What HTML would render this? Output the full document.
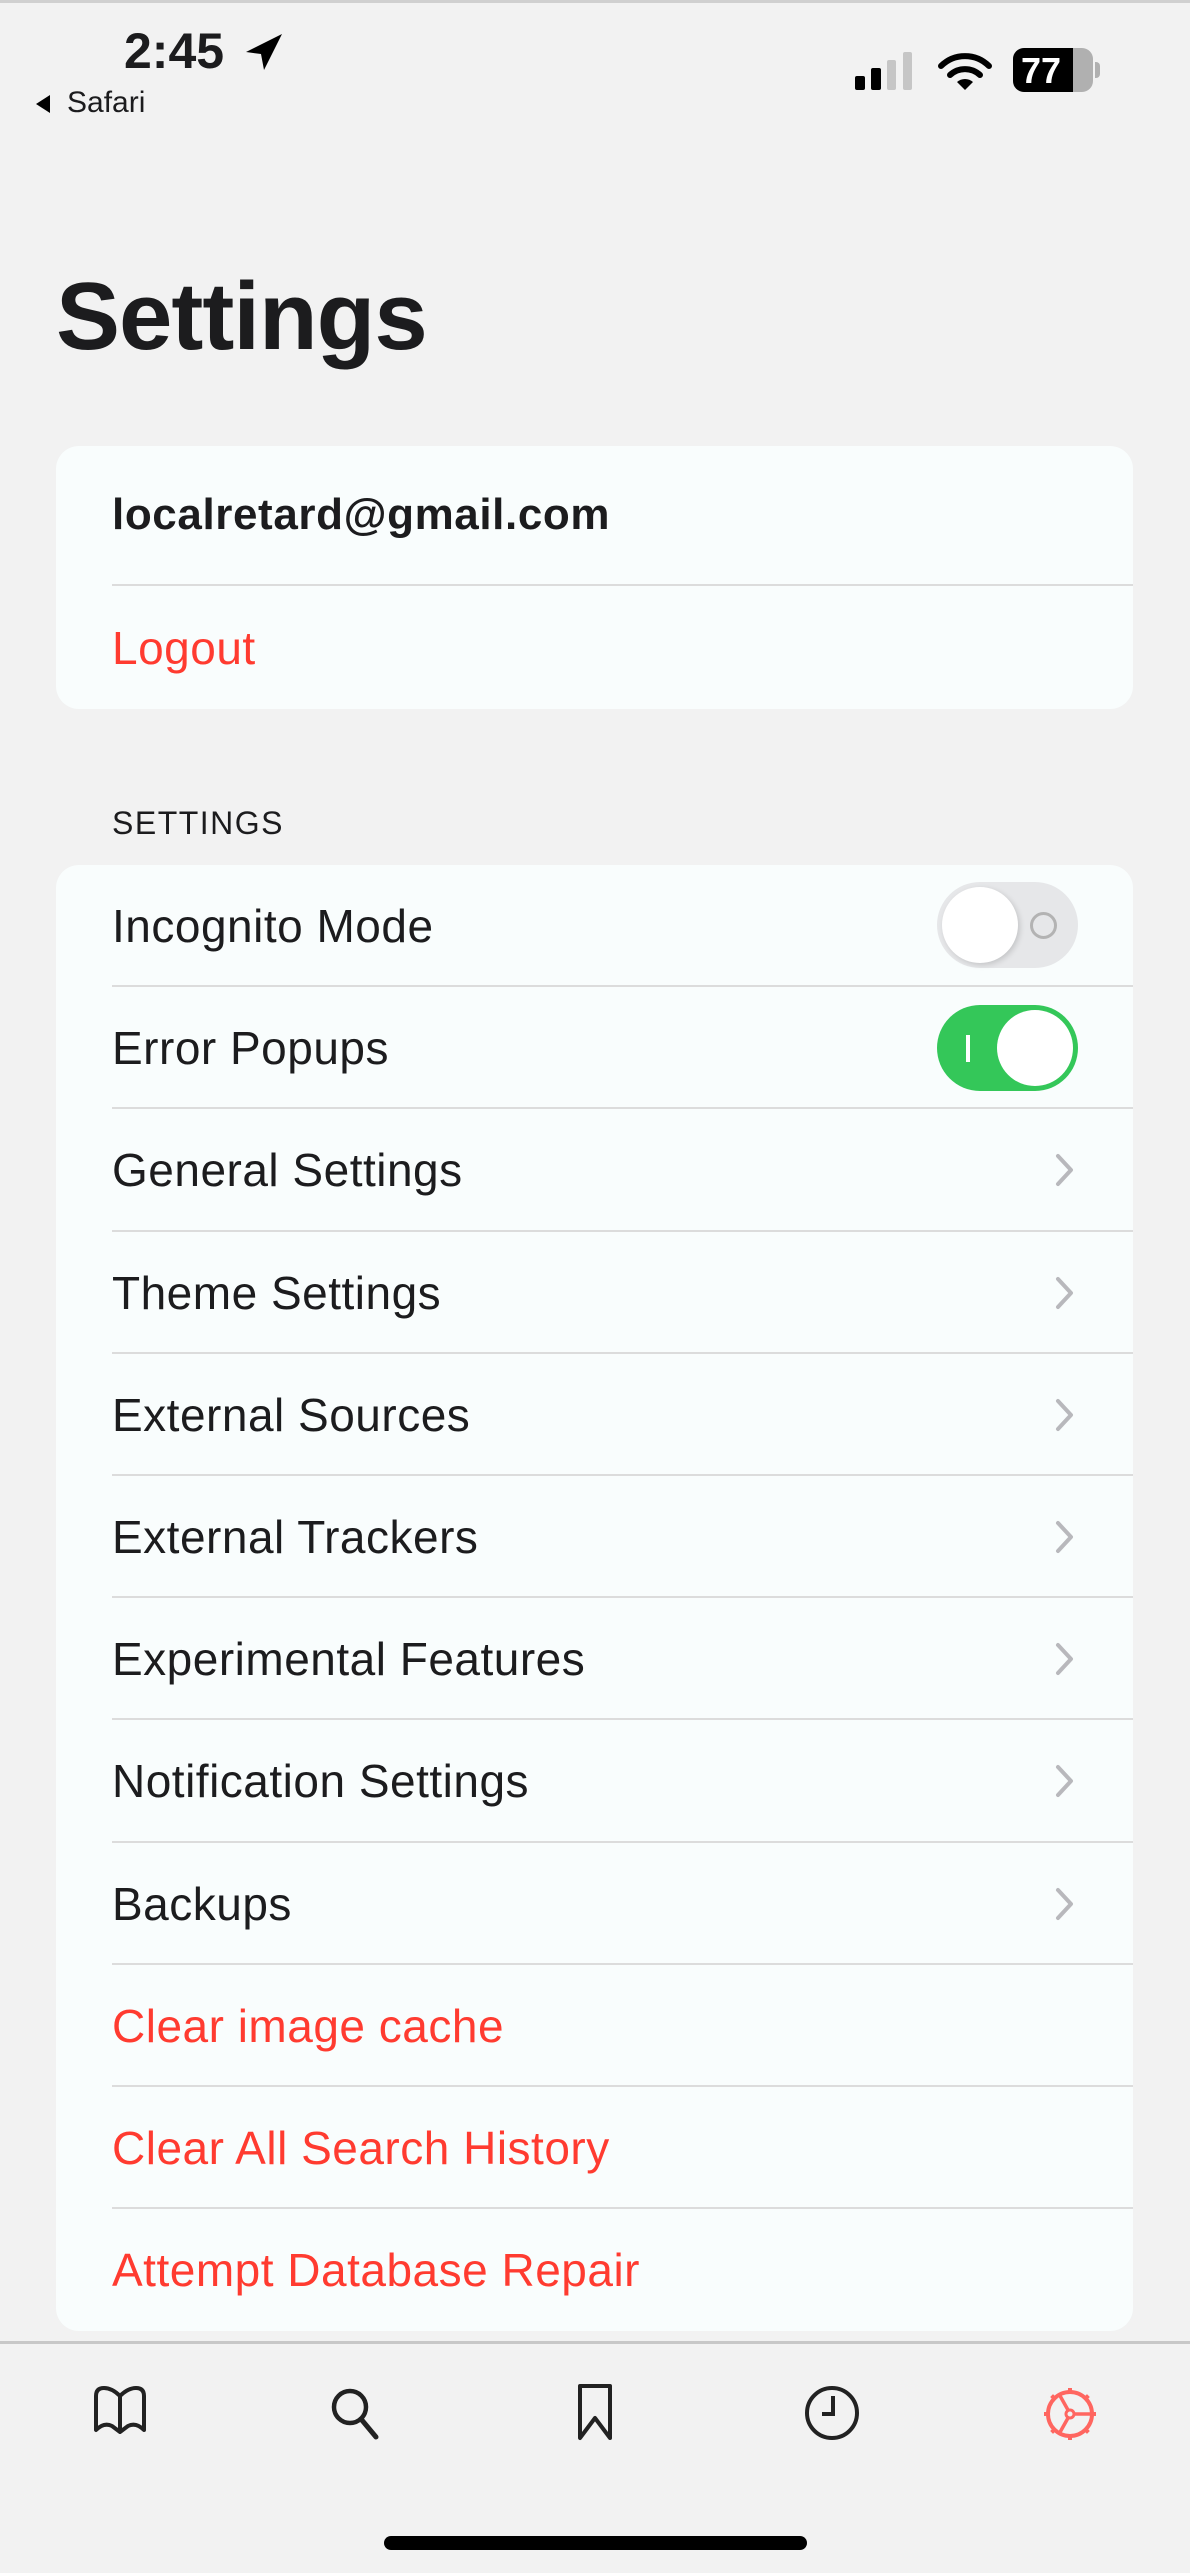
<!DOCTYPE html>
<html><head><meta charset="utf-8"><style>
*{margin:0;padding:0;box-sizing:border-box}
body{width:1190px;height:2573px;background:#f2f2f2;font-family:"Liberation Sans",sans-serif;position:relative;overflow:hidden;color:#1c1c1e}
.abs{position:absolute}
.card{position:absolute;left:56px;width:1077px;background:#f9fdfd;border-radius:23px;overflow:hidden}
.row{height:122.2px;position:relative;display:flex;align-items:center;padding-left:56px;font-size:46px;letter-spacing:0.5px}
.row:not(:last-child)::after{content:"";position:absolute;left:56px;right:0;bottom:0;height:2px;background:#dcdcdc}
.red{color:#ff3b30}
.chev{position:absolute;right:58px;top:50%;margin-top:-17px}
</style></head><body>
<div class="abs" style="left:0;top:0;width:1190px;height:3px;background:#d0d0d0"></div>
<div class="abs" style="left:124px;top:22px;font-size:50px;font-weight:bold;letter-spacing:0px">2:45</div>
<svg class="abs" style="left:244px;top:32px" width="40" height="40" viewBox="0 0 40 40"><path d="M38 2 L2 20 L17 22 L20 38 Z" fill="#000"/></svg>
<svg class="abs" style="left:34px;top:93px" width="20" height="22"><path d="M2 11 L16 2 L16 20 Z" fill="#000"/></svg>
<div class="abs" style="left:67px;top:86px;font-size:30px">Safari</div>
<svg class="abs" style="left:853px;top:50px" width="64" height="42"><rect x="2" y="26" width="10" height="14" rx="2" fill="#000"/><rect x="18" y="18" width="10" height="22" rx="2" fill="#000"/><rect x="34" y="10" width="9" height="30" rx="2" fill="#c6c6c6"/><rect x="50" y="2" width="9" height="38" rx="2" fill="#c6c6c6"/></svg>
<svg class="abs" style="left:935px;top:48px" width="60" height="44" viewBox="0 0 60 44"><path d="M6 18 A34 34 0 0 1 54 18" stroke="#000" stroke-width="6" fill="none" stroke-linecap="round"/><path d="M15 27 A22 22 0 0 1 45 27" stroke="#000" stroke-width="6" fill="none" stroke-linecap="round"/><path d="M22 34 L30 42 L38 34 A12 12 0 0 0 22 34Z" fill="#000"/></svg>
<div class="abs" style="left:1013px;top:48px;width:80px;height:44px;border-radius:11px;background:#b0b0b0;overflow:hidden"><div style="width:60px;height:44px;background:#000"></div><div class="abs" style="left:8px;top:2px;color:#fff;font-weight:bold;font-size:36px">77</div></div>
<div class="abs" style="left:1095px;top:62px;width:5px;height:16px;border-radius:0 4px 4px 0;background:#b0b0b0"></div>

<div class="abs" style="left:56px;top:262px;font-size:96px;font-weight:bold;letter-spacing:-1px">Settings</div>

<div class="card" style="top:446px;height:263px">
<div class="row" style="height:140px;font-weight:bold;font-size:44px;letter-spacing:0.6px"><span style="margin-top:-2px">localretard@gmail.com</span></div>
<div class="row red" style="height:123px">Logout</div>
</div>

<div class="abs" style="left:112px;top:805px;font-size:32px;letter-spacing:1.5px">SETTINGS</div>

<div class="card" style="top:865px;height:1466px">
<div class="row">Incognito Mode
<div class="abs" style="right:55px;top:17px;width:141px;height:86px;border-radius:43px;background:#e6e7e9">
<div class="abs" style="left:5px;top:5px;width:76px;height:76px;border-radius:50%;background:#fff;box-shadow:2px 2px 6px rgba(0,0,0,.15)"></div>
<div class="abs" style="left:93px;top:30px;width:27px;height:27px;border-radius:50%;border:3px solid #b3b3b3"></div></div></div>
<div class="row">Error Popups
<div class="abs" style="right:55px;top:18px;width:141px;height:86px;border-radius:43px;background:#34c759">
<div class="abs" style="left:29px;top:30px;width:4px;height:27px;background:#fff"></div>
<div class="abs" style="left:60px;top:5px;width:76px;height:76px;border-radius:50%;background:#fff"></div></div></div>
<div class="row">General Settings<svg class="chev" width="20" height="34"><path d="M3 3 L16 17 L3 31" stroke="#b8b8bc" stroke-width="4" fill="none" stroke-linecap="round" stroke-linejoin="round"/></svg></div>
<div class="row">Theme Settings<svg class="chev" width="20" height="34"><path d="M3 3 L16 17 L3 31" stroke="#b8b8bc" stroke-width="4" fill="none" stroke-linecap="round" stroke-linejoin="round"/></svg></div>
<div class="row">External Sources<svg class="chev" width="20" height="34"><path d="M3 3 L16 17 L3 31" stroke="#b8b8bc" stroke-width="4" fill="none" stroke-linecap="round" stroke-linejoin="round"/></svg></div>
<div class="row">External Trackers<svg class="chev" width="20" height="34"><path d="M3 3 L16 17 L3 31" stroke="#b8b8bc" stroke-width="4" fill="none" stroke-linecap="round" stroke-linejoin="round"/></svg></div>
<div class="row">Experimental Features<svg class="chev" width="20" height="34"><path d="M3 3 L16 17 L3 31" stroke="#b8b8bc" stroke-width="4" fill="none" stroke-linecap="round" stroke-linejoin="round"/></svg></div>
<div class="row">Notification Settings<svg class="chev" width="20" height="34"><path d="M3 3 L16 17 L3 31" stroke="#b8b8bc" stroke-width="4" fill="none" stroke-linecap="round" stroke-linejoin="round"/></svg></div>
<div class="row">Backups<svg class="chev" width="20" height="34"><path d="M3 3 L16 17 L3 31" stroke="#b8b8bc" stroke-width="4" fill="none" stroke-linecap="round" stroke-linejoin="round"/></svg></div>
<div class="row red">Clear image cache</div>
<div class="row red">Clear All Search History</div>
<div class="row red">Attempt Database Repair</div>
</div>

<div class="abs" style="left:0;top:2341px;width:1190px;height:3px;background:#c8c8c8"></div>
<svg class="abs" style="left:92px;top:2386px" width="56" height="50" viewBox="0 0 56 50"><path d="M4 44 V10 Q4 2 12 2 Q20 2 28 10 Q36 2 44 2 Q52 2 52 10 V44 Q44 36 36 40 L28 46 L20 40 Q12 36 4 44Z M28 10 V46" stroke="#222" stroke-width="4" fill="none" stroke-linejoin="round"/></svg>
<svg class="abs" style="left:328px;top:2385px" width="56" height="56" viewBox="0 0 56 56"><circle cx="22" cy="22" r="16" stroke="#222" stroke-width="4.5" fill="none"/><path d="M33 34 L48 52" stroke="#222" stroke-width="5" stroke-linecap="round"/></svg>
<svg class="abs" style="left:576px;top:2382px" width="38" height="60" viewBox="0 0 38 60"><path d="M4 4 H34 V56 L19 36 L4 56 Z" stroke="#222" stroke-width="4" fill="none" stroke-linejoin="round"/></svg>
<svg class="abs" style="left:804px;top:2385px" width="56" height="56" viewBox="0 0 56 56"><circle cx="28" cy="28" r="25" stroke="#222" stroke-width="4" fill="none"/><path d="M29 11 V29 H18" stroke="#222" stroke-width="4" fill="none"/></svg>
<svg class="abs" style="left:1041px;top:2385px" width="58" height="58" viewBox="0 0 58 58"><circle cx="29" cy="29" r="22" stroke="#ff6660" stroke-width="4" fill="none"/><g stroke="#ff6660" stroke-width="4"><path d="M29 3V9M29 49V55M3 29H9M49 29H55M10.6 10.6L14.8 14.8M43.2 43.2L47.4 47.4M10.6 47.4L14.8 43.2M43.2 14.8L47.4 10.6"/></g><circle cx="29" cy="29" r="4" stroke="#ff6660" stroke-width="3" fill="none"/><path d="M33 29H51M27 25L18 9M27 33L18 49" stroke="#ff6660" stroke-width="3.5"/></svg>
<div class="abs" style="left:384px;top:2536px;width:423px;height:14px;border-radius:7px;background:#000"></div>
</body></html>
